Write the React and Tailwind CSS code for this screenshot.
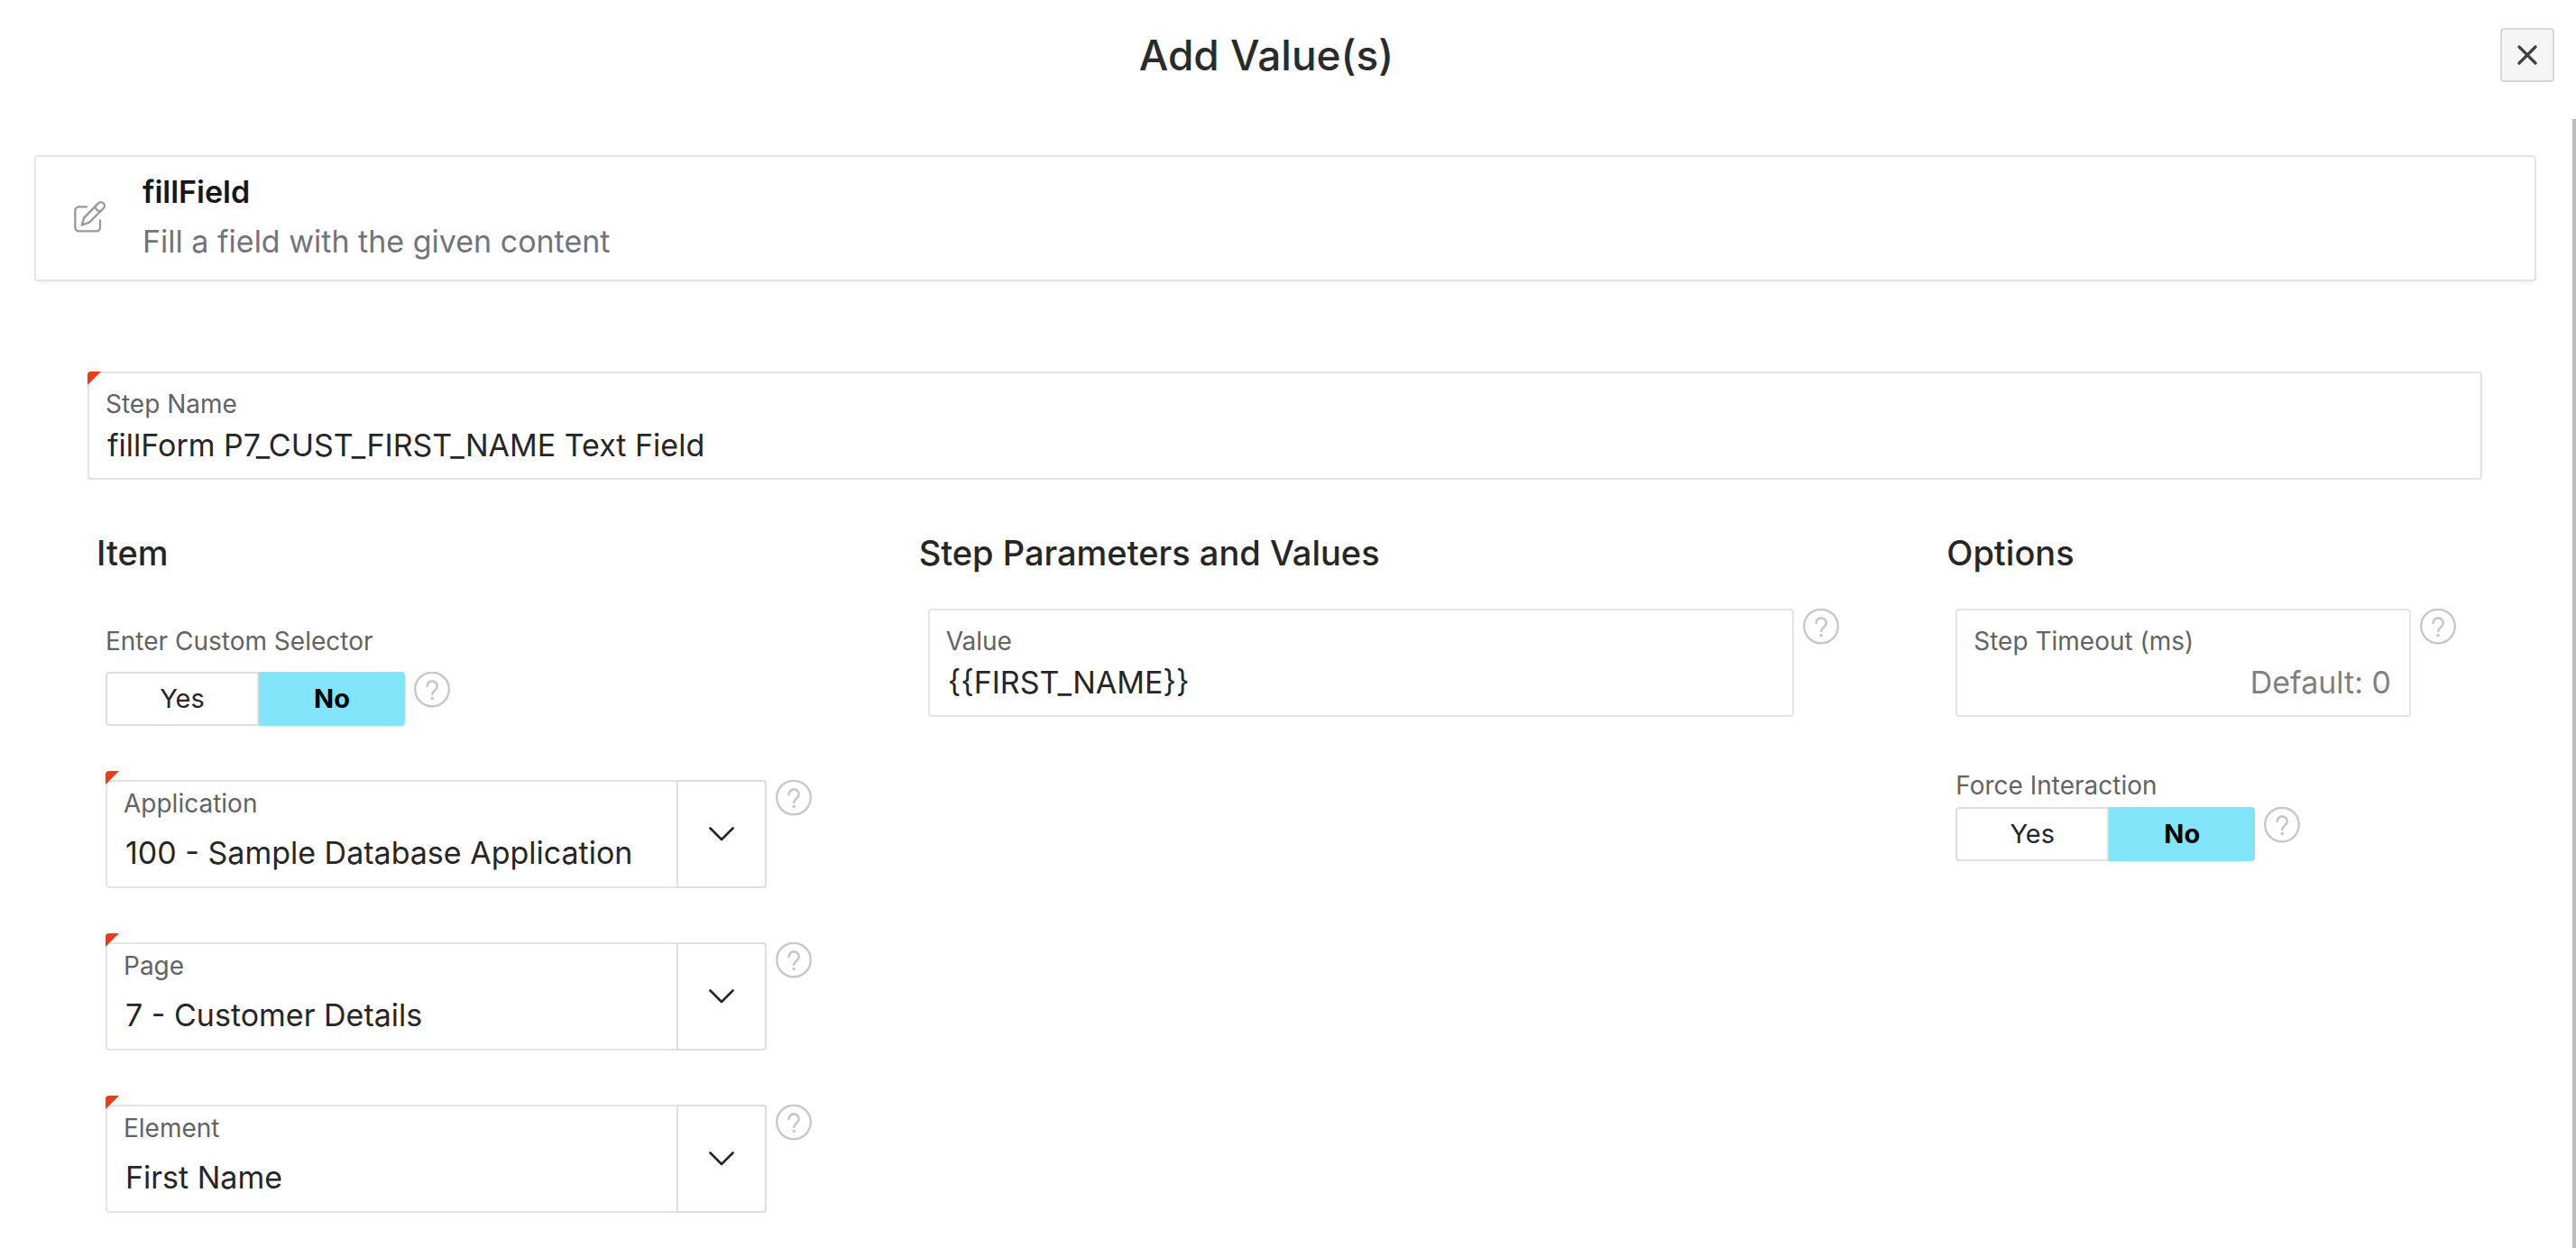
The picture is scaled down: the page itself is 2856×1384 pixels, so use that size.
function HelpButton({ about }) {
  return (
    <button type="button" aria-label={`Help: ${about}`} className="block size-10 shrink-0">
      <svg viewBox="0 0 40 40" fill="none" stroke="#c8c8c8" className="size-10">
        <circle cx="20" cy="19.5" r="18.8" strokeWidth="2.4" />
        <path d="M14.6 16a5.6 5.6 0 0 1 11.2 0c0 4.2-5.6 4.6-5.6 9" strokeWidth="2.6" strokeLinecap="round" />
        <circle cx="20.2" cy="29.6" r="1.8" fill="#c8c8c8" stroke="none" />
      </svg>
    </button>
  );
}

function RequiredCorner() {
  return (
    <svg viewBox="0 0 15 15" className="size-[15px]" aria-hidden="true">
      <path d="M0 15V4a4 4 0 0 1 4-4h11z" fill="#ee3a17" />
    </svg>
  );
}

function TextField({ id, label, value, placeholder, required, alignRight }) {
  return (
    <div className="grid min-w-0 flex-1">
      <input
        id={id}
        type="text"
        defaultValue={value}
        placeholder={placeholder}
        className={
          "col-start-1 row-start-1 h-[120px] w-full min-w-0 rounded border-2 border-[#e4e4e4] bg-white px-5 pt-[42px] text-[34px] leading-10 text-[#262626] placeholder:text-[#808080] " +
          (alignRight ? "text-right" : "text-left")
        }
      />
      <label htmlFor={id} className="col-start-1 row-start-1 self-start justify-self-start pl-5 pt-4 text-[28px] leading-10 text-[#636363]">
        {label}
      </label>
      {required && (
        <span className="pointer-events-none col-start-1 row-start-1 self-start justify-self-start">
          <RequiredCorner />
        </span>
      )}
    </div>
  );
}

function SelectField({ id, label, value }) {
  return (
    <div className="flex gap-[10px]">
      <div className="relative grid min-w-0 flex-1 grid-cols-[minmax(0,1fr)_100px]">
        <select
          id={id}
          className="col-span-2 col-start-1 row-start-1 h-[120px] w-full appearance-none rounded border-2 border-[#e4e4e4] bg-white pl-5 pr-[104px] pt-[42px] text-[34px] leading-10 text-[#262626]"
        >
          <option>{value}</option>
        </select>
        <label htmlFor={id} className="col-start-1 row-start-1 self-start justify-self-start pl-5 pt-[6px] text-[28px] leading-10 text-[#636363]">
          {label}
        </label>
        <span className="pointer-events-none col-start-2 row-start-1 flex items-center justify-center rounded-r border-2 border-[#dedede]">
          <svg viewBox="0 0 28 16" fill="none" stroke="#262626" strokeWidth="2.6" strokeLinecap="round" strokeLinejoin="round" className="h-4 w-7">
            <path d="M1.5 1.5 14 14 26.5 1.5" />
          </svg>
        </span>
        <span className="pointer-events-none absolute -top-[10px] left-0">
          <RequiredCorner />
        </span>
      </div>
      <HelpButton about={label} />
    </div>
  );
}

function Toggle({ name, label, gap }) {
  return (
    <fieldset>
      <legend className={"text-[28px] leading-10 text-[#636363] " + gap}>{label}</legend>
      <div className="flex gap-[10px]">
        <div className="flex h-[60px] text-[29px]">
          <label className="flex w-[170px] items-center justify-center rounded-l border-2 border-[#dedede] bg-white text-[#262626] has-checked:border-[#82e4f8] has-checked:bg-[#82e4f8] has-checked:font-bold has-checked:text-black">
            <input type="radio" name={name} className="sr-only" />
            Yes
          </label>
          <label className="flex w-[162px] items-center justify-center rounded-r border-2 border-[#dedede] bg-white text-[#262626] has-checked:border-[#82e4f8] has-checked:bg-[#82e4f8] has-checked:font-bold has-checked:text-black">
            <input type="radio" name={name} defaultChecked className="sr-only" />
            No
          </label>
        </div>
        <HelpButton about={label} />
      </div>
    </fieldset>
  );
}

function Column({ title, span, children }) {
  return (
    <section className={span}>
      <h2 className="pl-[10px] text-[38px] font-medium leading-[50px] text-[#262626]">{title}</h2>
      {children}
    </section>
  );
}

export default function App() {
  return (
    <div className="flex h-screen flex-col overflow-hidden bg-white font-[Inter,sans-serif]">
      <header className="flex items-center pb-[41px] pl-9 pr-6 pt-[31px]">
        <h1 className="flex-1 text-center text-[46px] font-medium leading-[60px] text-[#2b2b2b]">Add Value(s)</h1>
        <button type="button" aria-label="Close" className="flex size-[60px] items-center justify-center rounded border-2 border-[#d8d8d8] bg-[#f5f5f5]">
          <svg viewBox="0 0 22 22" stroke="#404040" strokeWidth="3.2" strokeLinecap="round" className="size-[22px]">
            <path d="M2 2 20 20M20 2 2 20" />
          </svg>
        </button>
      </header>

      <div className="flex min-h-0 flex-1">
        <main className="min-w-0 flex-1 pl-[38px] pr-10 pt-10">
          <div className="flex h-[140px] items-center gap-10 rounded border-2 border-[#e4e4e4] pb-1 pl-[42px] shadow-[0_4px_6px_-2px_rgba(0,0,0,0.06)]">
            <svg viewBox="36 68 108 108" fill="none" stroke="#999999" strokeWidth="7" strokeLinecap="round" strokeLinejoin="round" className="size-9">
              <path d="M78 90H52a12 12 0 0 0-12 12v57a12 12 0 0 0 12 12h59a12 12 0 0 0 12-12v-24" />
              <path d="M62 151 70 126 117 78a12 12 0 0 1 17 17L87 142z" />
              <path d="M108 87a14 14 0 0 0 17 17" />
            </svg>
            <div>
              <p className="text-[34px] font-semibold leading-[55px] text-[#17171a]">fillField</p>
              <p className="text-[34px] leading-[55px] text-[#73737c]">Fill a field with the given content</p>
            </div>
          </div>

          <form className="mt-[100px] pl-[59px] pr-[60px]">
            <TextField id="step-name" label="Step Name" value="fillForm P7_CUST_FIRST_NAME Text Field" required />

            <div className="mt-14 grid grid-cols-12 gap-x-20">
              <Column title="Item" span="col-span-4">
                <div className="mt-[53px] space-y-[60px] pl-5 pr-[29px]">
                  <Toggle name="custom-selector" label="Enter Custom Selector" gap="pb-[14px]" />
                  <SelectField id="application" label="Application" value="100 - Sample Database Application" />
                  <SelectField id="page" label="Page" value="7 - Customer Details" />
                  <SelectField id="element" label="Element" value="First Name" />
                </div>
              </Column>

              <Column title="Step Parameters and Values" span="col-span-5">
                <div className="mt-[37px] flex gap-[10px] pl-5 pr-[29px]">
                  <TextField id="value" label="Value" value="{{FIRST_NAME}}" />
                  <HelpButton about="Value" />
                </div>
              </Column>

              <Column title="Options" span="col-span-3">
                <div className="mt-[37px] space-y-14 pl-5 pr-[29px]">
                  <div className="flex gap-[10px]">
                    <TextField id="timeout" label="Step Timeout (ms)" placeholder="Default: 0" alignRight />
                    <HelpButton about="Step Timeout (ms)" />
                  </div>
                  <Toggle name="force-interaction" label="Force Interaction" gap="pb-1" />
                </div>
              </Column>
            </div>
          </form>
        </main>
        <div className="w-1 shrink-0 bg-[#bdbdbd]" />
      </div>
    </div>
  );
}
